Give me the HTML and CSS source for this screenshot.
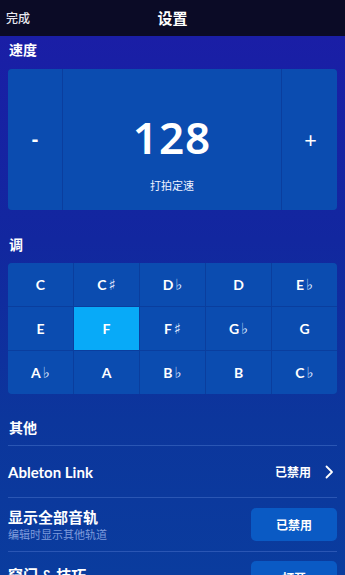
FILE: index.html
```html
<!DOCTYPE html>
<html lang="zh">
<head>
<meta charset="utf-8">
<link rel="stylesheet" href="styles.css">
</head>
<body>
<div class="topbar">
  <span class="done">完成</span>
  <span class="title">设置</span>
  <span></span>
</div>
<div class="content">
  <div class="section-title first">速度</div>
  <div class="tempo">
    <div class="tbtn">-</div>
    <div class="tmid">
      <div class="bpm">128</div>
      <div class="tap">打拍定速</div>
    </div>
    <div class="tbtn plus">+</div>
  </div>

  <div class="section-title">调</div>
  <div class="keys">
    <div class="key">C</div>
    <div class="key">C<span class="acc">♯</span></div>
    <div class="key">D<span class="acc">♭</span></div>
    <div class="key">D</div>
    <div class="key">E<span class="acc">♭</span></div>
    <div class="key">E</div>
    <div class="key sel">F</div>
    <div class="key">F<span class="acc">♯</span></div>
    <div class="key">G<span class="acc">♭</span></div>
    <div class="key">G</div>
    <div class="key">A<span class="acc">♭</span></div>
    <div class="key">A</div>
    <div class="key">B<span class="acc">♭</span></div>
    <div class="key">B</div>
    <div class="key">C<span class="acc">♭</span></div>
  </div>

  <div class="section-title other">其他</div>
  <div class="list">
    <div class="row link">
      <span class="row-title">Ableton Link</span>
      <span class="row-right">已禁用
        <svg class="chev" width="9" height="14" viewBox="0 0 9 14"><path d="M1.5 1.5 L7 7 L1.5 12.5" fill="none" stroke="#fff" stroke-width="1.8" stroke-linecap="round" stroke-linejoin="round"/></svg>
      </span>
    </div>
    <div class="row tracks">
      <div class="row-text">
        <div class="row-title">显示全部音轨</div>
        <div class="row-sub">编辑时显示其他轨道</div>
      </div>
      <div class="btn">已禁用</div>
    </div>
    <div class="row tips">
      <div class="row-text">
        <div class="row-title">窍门 &amp; 技巧</div>
      </div>
      <div class="btn">打开</div>
    </div>
  </div>
</div>
</body>
</html>
```
FILE: styles.css
```css
* { box-sizing: border-box; }
html, body { margin: 0; padding: 0; }
body {
  width: 345px;
  height: 575px;
  overflow: hidden;
  font-family: Lato, "Noto Sans CJK SC", sans-serif;
  color: #fff;
  background: linear-gradient(180deg, #1a1ea6 36px, #12279f 240px, #0c369c 420px, #0a3c9e 575px);
}
.topbar {
  height: 36px;
  background: #0b0b26;
  display: grid;
  grid-template-columns: 1fr auto 1fr;
  align-items: center;
  padding: 0 6px 2px;
}
.done { font-size: 12px; font-weight: 500; color: #e8e8f0; }
.title { font-size: 15px; font-weight: 700; }
.content { padding: 0 8px; }
.section-title {
  font-size: 14px;
  font-weight: 700;
  line-height: 20px;
  margin-top: 25px;
  margin-bottom: 8px;
  padding-left: 1px;
}
.section-title.first { margin-top: 4px; margin-bottom: 9px; }
.section-title.other { margin-top: 24px; margin-bottom: 7px; }
.tempo {
  height: 141px;
  display: grid;
  grid-template-columns: 54px 1fr 55px;
  gap: 1px;
  background: #0a3e9e;
  border-radius: 4px;
  overflow: hidden;
}
.tbtn, .tmid { background: #0b4cb0; display: flex; align-items: center; justify-content: center; }
.tbtn { font-size: 20px; font-family: "Noto Sans", sans-serif; font-weight: 700; padding-bottom: 2px; }
.tbtn.plus { font-size: 22px; font-weight: 400; padding-left: 2px; }
.tmid { flex-direction: column; justify-content: flex-start; padding-top: 45px; }
.bpm {
  font-family: "Noto Sans", sans-serif;
  font-size: 44px;
  font-weight: 600;
  line-height: 46px;
  letter-spacing: 1px;
}
.tap { font-size: 11px; line-height: 16px; margin-top: 18px; color: #f0f3ff; }
.keys {
  display: grid;
  grid-template-columns: repeat(5, 1fr);
  grid-template-rows: repeat(3, 43px);
  gap: 1px;
  background: #0a3e9e;
  border-radius: 4px;
  overflow: hidden;
}
.key {
  background: #0b4cb0;
  display: flex;
  align-items: center;
  justify-content: center;
  font-size: 14px;
  font-weight: 700;
}
.key .acc { font-weight: 400; font-size: 15px; margin-left: 2px; color: #dfe6ff; font-family: "DejaVu Sans", sans-serif; }
.key.sel { background: #08aaf8; }
.list { border-top: 1px solid #2a56b4; }
.row {
  display: flex;
  align-items: center;
  justify-content: space-between;
  border-bottom: 1px solid #2a56b4;
}
.row.link { height: 52px; }
.row.tracks { height: 54px; }
.row.tips { height: 54px; align-items: flex-start; padding-top: 9px; }
.row-title { font-size: 15px; font-weight: 700; line-height: 18px; }
.row.tips .row-title { margin-top: 5px; }
.row-sub { font-size: 11px; color: #7f9cdc; line-height: 15px; margin-top: 1px; }
.row-right { display: flex; align-items: center; font-size: 12px; font-weight: 700; margin-right: 3px; }
.chev { margin-left: 14px; }
.btn {
  width: 86px;
  height: 33px;
  border-radius: 5px;
  background: #0a5ac4;
  display: flex;
  align-items: center;
  justify-content: center;
  font-size: 12px;
  font-weight: 700;
}
```
